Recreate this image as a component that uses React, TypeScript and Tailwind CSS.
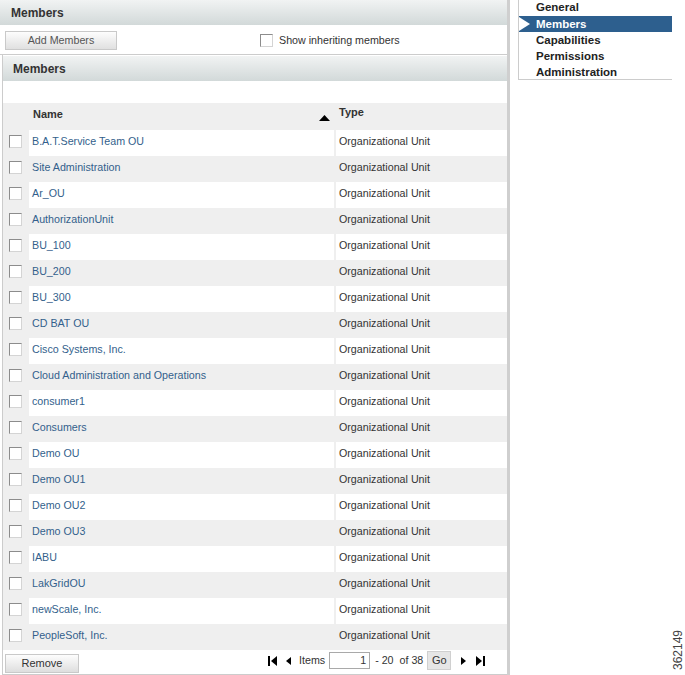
import React from "react";

const rows = [
  "B.A.T.Service Team OU",
  "Site Administration",
  "Ar_OU",
  "AuthorizationUnit",
  "BU_100",
  "BU_200",
  "BU_300",
  "CD BAT OU",
  "Cisco Systems, Inc.",
  "Cloud Administration and Operations",
  "consumer1",
  "Consumers",
  "Demo OU",
  "Demo OU1",
  "Demo OU2",
  "Demo OU3",
  "IABU",
  "LakGridOU",
  "newScale, Inc.",
  "PeopleSoft, Inc.",
];

function Box() {
  return (
    <div className="w-[13px] h-[13px] bg-white border border-t-[#8c8c8c] border-l-[#8c8c8c] border-r-[#d4d4d4] border-b-[#d4d4d4]" />
  );
}

function Header({ text, pl }: { text: string; pl: string }) {
  return (
    <div
      className={`h-[25px] flex items-center bg-linear-to-b from-[#f1f3f3] to-[#d2d9d9] ${pl} text-[12px] font-bold text-[#333]`}
    >
      {text}
    </div>
  );
}

export default function App() {
  return (
    <div className="relative flex w-[685px] h-[675px] bg-white font-['Liberation_Sans',Arial,sans-serif] overflow-hidden">
      {/* left column */}
      <div className="w-[510px] h-[675px] flex flex-col border-r-[3px] border-[#cfcfcf]">
        <Header text="Members" pl="pl-[11px]" />
        <div className="h-[30px] flex items-start border-b border-[#cccccc]">
          <div className="ml-[5px] mt-[6px] w-[112px] h-[19px] flex items-center justify-center border border-[#c9c9c9] bg-linear-to-b from-[#fdfdfd] to-[#e0e0e0] text-[10.7px] text-[#555]">
            Add Members
          </div>
          <div className="ml-[143px] mt-[7px] flex items-center">
            <Box />
            <span className="ml-[6px] text-[10.7px] text-[#333]">Show inheriting members</span>
          </div>
        </div>

        {/* panel */}
        <div className="ml-[2px] flex-1 flex flex-col border-l border-b border-[#cccccc]">
          <div className="mt-[1px] h-[25px] flex items-center bg-linear-to-b from-[#f1f3f3] to-[#d2d9d9] pl-[10px] text-[12px] font-bold text-[#333]">
            Members
          </div>
          <div className="h-[22px]" />
          {/* table header */}
          <div className="h-[27px] flex bg-[#efefef]">
            <div className="w-[26px]" />
            <div className="w-[305px] flex justify-between pl-[4px] pr-[4px]">
              <span className="pt-[5px] text-[11px] font-bold text-[#333] leading-[13px]">Name</span>
              <svg width="11" height="6" viewBox="0 0 11 6" className="mt-[12px]">
                <polygon points="5.5,0 11,6 0,6" fill="#000" />
              </svg>
            </div>
            <div className="ml-[2px] flex-1 pl-[3px] pt-[3px] text-[11px] font-bold text-[#333] leading-[13px]">
              Type
            </div>
          </div>
          {/* rows */}
          {rows.map((name, i) => {
            const white = i % 2 === 0;
            return (
              <div key={name} className="h-[26px] flex bg-[#efefef]">
                <div className="w-[26px] pl-[6px] pt-[5px]">
                  <Box />
                </div>
                <div
                  className={`w-[305px] pl-[3px] pt-[4px] text-[10.7px] leading-[14px] text-[#335f8c] ${white ? "bg-white" : ""}`}
                >
                  {name}
                </div>
                <div
                  className={`ml-[2px] flex-1 pl-[3px] pt-[4px] text-[10.7px] leading-[14px] text-[#333] ${white ? "bg-white" : ""}`}
                >
                  Organizational Unit
                </div>
              </div>
            );
          })}
          {/* bottom bar */}
          <div className="flex-1 flex items-start bg-white">
            <div className="ml-[2px] mt-[4px] w-[74px] h-[19px] flex items-center justify-center border border-[#c9c9c9] bg-linear-to-b from-[#fdfdfd] to-[#dedede] text-[11px] text-[#333]">
              Remove
            </div>
            <div className="ml-[189px] mt-[1px] h-[19px] flex items-center text-[10.7px] text-[#333]">
              <svg width="9" height="10" viewBox="0 0 9 10">
                <rect x="0" y="0" width="2" height="10" fill="#000" />
                <polygon points="9,0 9,10 3,5" fill="#000" />
              </svg>
              <svg width="6" height="10" viewBox="0 0 6 10" className="ml-[8px]">
                <polygon points="6,1 6,9 1,5" fill="#000" />
              </svg>
              <span className="ml-[8px]">Items</span>
              <div className="ml-[4px] w-[41px] h-[17px] border border-[#a9a9a9] bg-white flex items-center justify-end pr-[3px]">
                1
              </div>
              <span className="ml-[5px] whitespace-pre">- 20  of 38</span>
              <div className="ml-[4px] w-[24px] h-[19px] flex items-center justify-center bg-[#e6e6e6] border border-[#d0d0d0] text-[11px]">
                Go
              </div>
              <svg width="6" height="10" viewBox="0 0 6 10" className="ml-[10px]">
                <polygon points="0,1 0,9 5,5" fill="#000" />
              </svg>
              <svg width="9" height="10" viewBox="0 0 9 10" className="ml-[9px]">
                <polygon points="0,0 0,10 6,5" fill="#000" />
                <rect x="7" y="0" width="2" height="10" fill="#000" />
              </svg>
            </div>
          </div>
        </div>
      </div>

      {/* right nav */}
      <div className="ml-[8px] w-[154px] h-[80px] border-l border-b border-[#cccccc] text-[11.5px] font-bold text-[#222]">
        <div className="h-[16px] pl-[17px] leading-[14px]">General</div>
        <div className="relative h-[16px] pl-[17px] leading-[16px] bg-[#2d5f8e] text-white">
          <svg width="11" height="14" viewBox="0 0 11 14" className="absolute left-0 top-[1px]">
            <polygon points="0,0 11,7 0,14" fill="#fff" />
          </svg>
          Members
        </div>
        <div className="h-[16px] pl-[17px] leading-[16px]">Capabilities</div>
        <div className="h-[16px] pl-[17px] leading-[16px]">Permissions</div>
        <div className="h-[16px] pl-[17px] leading-[16px]">Administration</div>
      </div>

      <div className="absolute left-[673px] top-[630px] [writing-mode:vertical-rl] rotate-180 text-[12px] text-[#444] leading-[11px]">
        362149
      </div>
    </div>
  );
}
